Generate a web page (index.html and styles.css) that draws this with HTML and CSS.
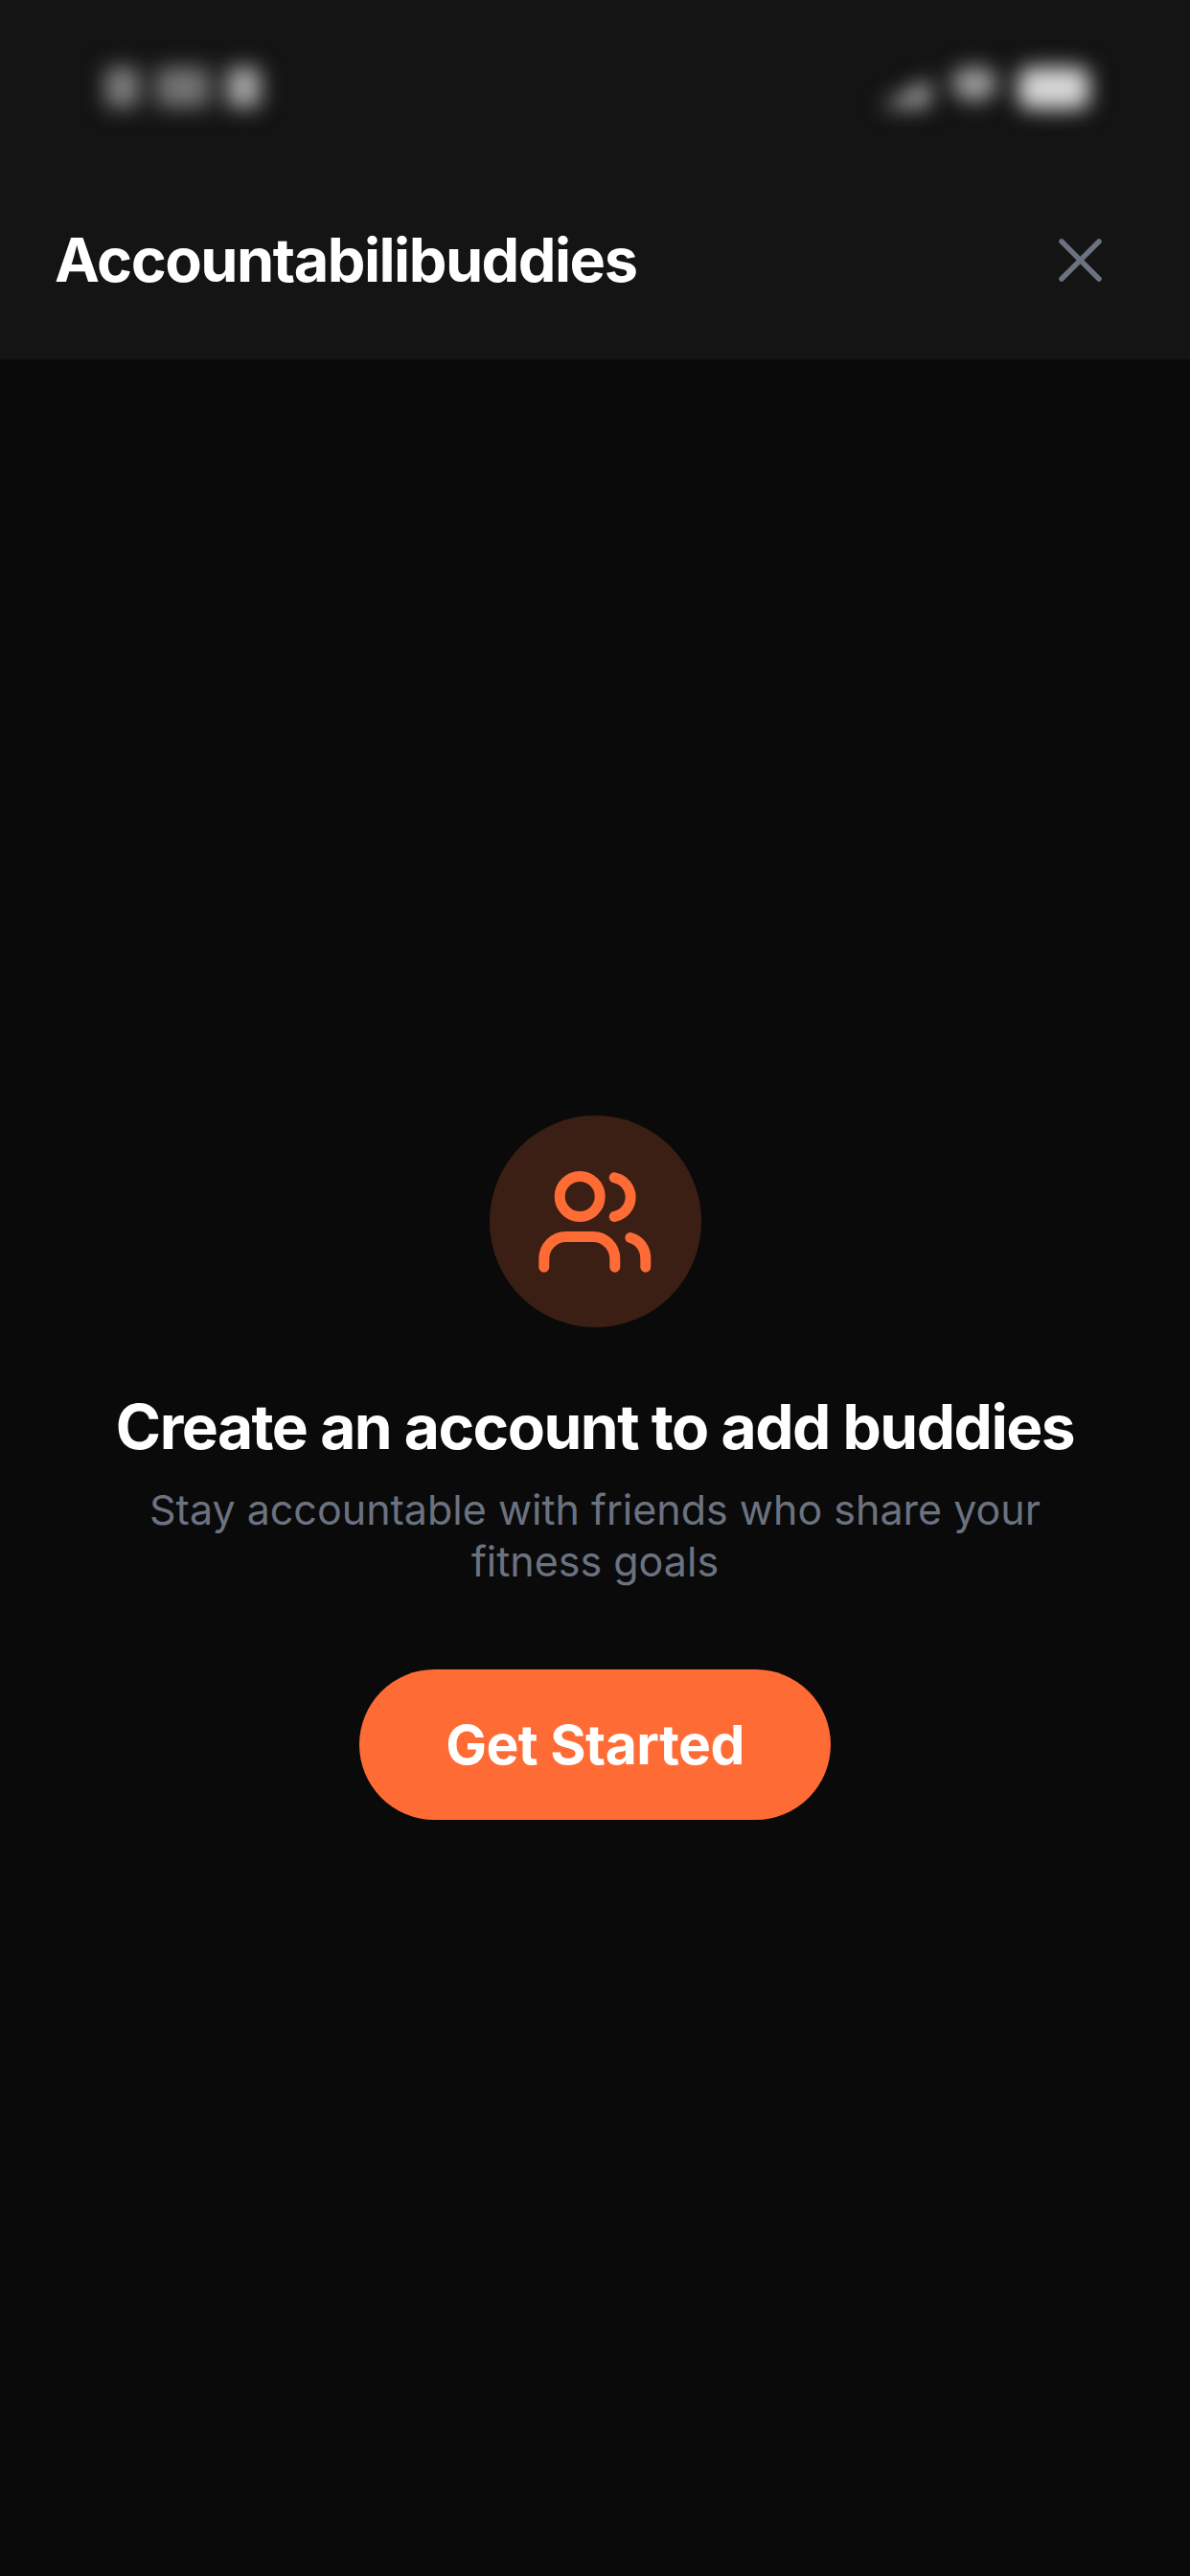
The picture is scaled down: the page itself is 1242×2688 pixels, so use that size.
FILE: index.html
```html
<!DOCTYPE html>
<html lang="en">
  <head>
    <meta charset="UTF-8" />
    <meta name="viewport" content="width=device-width, initial-scale=1.0" />
    <title>Accountabilibuddies</title>
    <link rel="stylesheet" href="styles.css">
  </head>
  <body>
    <div class="screen">
      <header class="top">
        <div class="status-bar">
          <div class="status-time">
            <span class="blob blob-a"></span>
            <span class="blob blob-b"></span>
            <span class="blob blob-c"></span>
          </div>
          <div class="status-icons">
            <span class="blob blob-signal"></span>
            <span class="blob blob-wifi"></span>
            <span class="blob blob-battery"></span>
          </div>
        </div>
        <div class="title-row">
          <h1>Accountabilibuddies</h1>
          <button class="close" aria-label="Close">
            <svg width="45" height="45" viewBox="0 0 45 45" fill="none" stroke="#6b7280" stroke-width="5.5" stroke-linecap="round">
              <path d="M3 3 L42 42" />
              <path d="M42 3 L3 42" />
            </svg>
          </button>
        </div>
      </header>

      <main class="empty">
        <div class="icon-circle">
          <svg width="120" height="120" viewBox="0 0 120 120" fill="none" stroke="#ff6b35" stroke-width="11" stroke-linecap="round" stroke-linejoin="round">
            <circle cx="44.2" cy="33.5" r="21" />
            <path d="M80.2 13.8 A20.7 20.7 0 0 1 80.2 54.5" />
            <path d="M6.8 107.2 V98.5 a23 23 0 0 1 23 -23 h28 a23 23 0 0 1 23 23 v8.7" />
            <path d="M96.8 76.5 C106 79 112.8 87 112.8 98.5 V107.2" />
          </svg>
        </div>
        <h2>Create an account to add buddies</h2>
        <p>Stay accountable with friends who share your fitness goals</p>
        <button class="cta">Get Started</button>
      </main>
    </div>
  </body>
</html>
```

FILE: styles.css
```css
* {
  box-sizing: border-box;
}

body {
  margin: 0;
  background: #0a0a0a;
  font-family: "Inter", "Liberation Sans", sans-serif;
}

.screen {
  width: 1242px;
  height: 2688px;
  display: flex;
  flex-direction: column;
}

.top {
  height: 375px;
  background: #141414;
  flex-shrink: 0;
}

.status-bar {
  height: 180px;
  padding: 70px 105px 0 110px;
  display: flex;
  justify-content: space-between;
  align-items: flex-start;
}

.status-time,
.status-icons {
  display: flex;
  filter: blur(11px);
}

.status-time {
  gap: 18px;
}

.status-icons {
  gap: 22px;
  align-items: flex-start;
}

.blob {
  display: block;
  height: 42px;
  border-radius: 6px;
}

.blob-a {
  width: 35px;
  background: #808080;
}

.blob-b {
  width: 56px;
  background: #747474;
}

.blob-c {
  width: 35px;
  background: #a8a8a8;
}

.blob-signal {
  width: 53px;
  height: 30px;
  margin-top: 12px;
  background: #a8a8a8;
  clip-path: polygon(0 100%, 100% 0, 100% 100%);
}

.blob-wifi {
  width: 48px;
  height: 36px;
  background: #a0a0a0;
  border-radius: 50% 50% 50% 50% / 40% 40% 60% 60%;
}

.blob-battery {
  width: 74px;
  height: 44px;
  background: #d8d8d8;
  border-radius: 12px;
}

.title-row {
  display: flex;
  justify-content: space-between;
  align-items: center;
  padding: 0 92px 0 57px;
  height: 182px;
}

h1 {
  margin: 0;
  color: #fff;
  font-size: 63px;
  font-weight: 700;
  letter-spacing: -1.5px;
}

.close {
  display: flex;
  padding: 0;
  background: none;
  border: none;
}

.empty {
  flex: 1;
  display: flex;
  flex-direction: column;
  align-items: center;
  justify-content: center;
  padding: 0 120px;
  text-align: center;
}

.icon-circle {
  width: 221px;
  height: 221px;
  border-radius: 50%;
  background: #3b1f14;
  display: flex;
  align-items: center;
  justify-content: center;
  margin-bottom: 68px;
}

h2 {
  margin: 0 0 23px;
  color: #fff;
  font-size: 64px;
  font-weight: 700;
  line-height: 72px;
  letter-spacing: -1.5px;
  white-space: nowrap;
}

.empty p {
  margin: 0 0 86px;
  color: #6b7280;
  font-size: 43px;
  line-height: 54px;
}

.cta {
  width: 492px;
  height: 157px;
  border: none;
  border-radius: 79px;
  background: #ff6b35;
  color: #fff;
  font-family: inherit;
  font-size: 57px;
  font-weight: 700;
  letter-spacing: -0.5px;
}
```
